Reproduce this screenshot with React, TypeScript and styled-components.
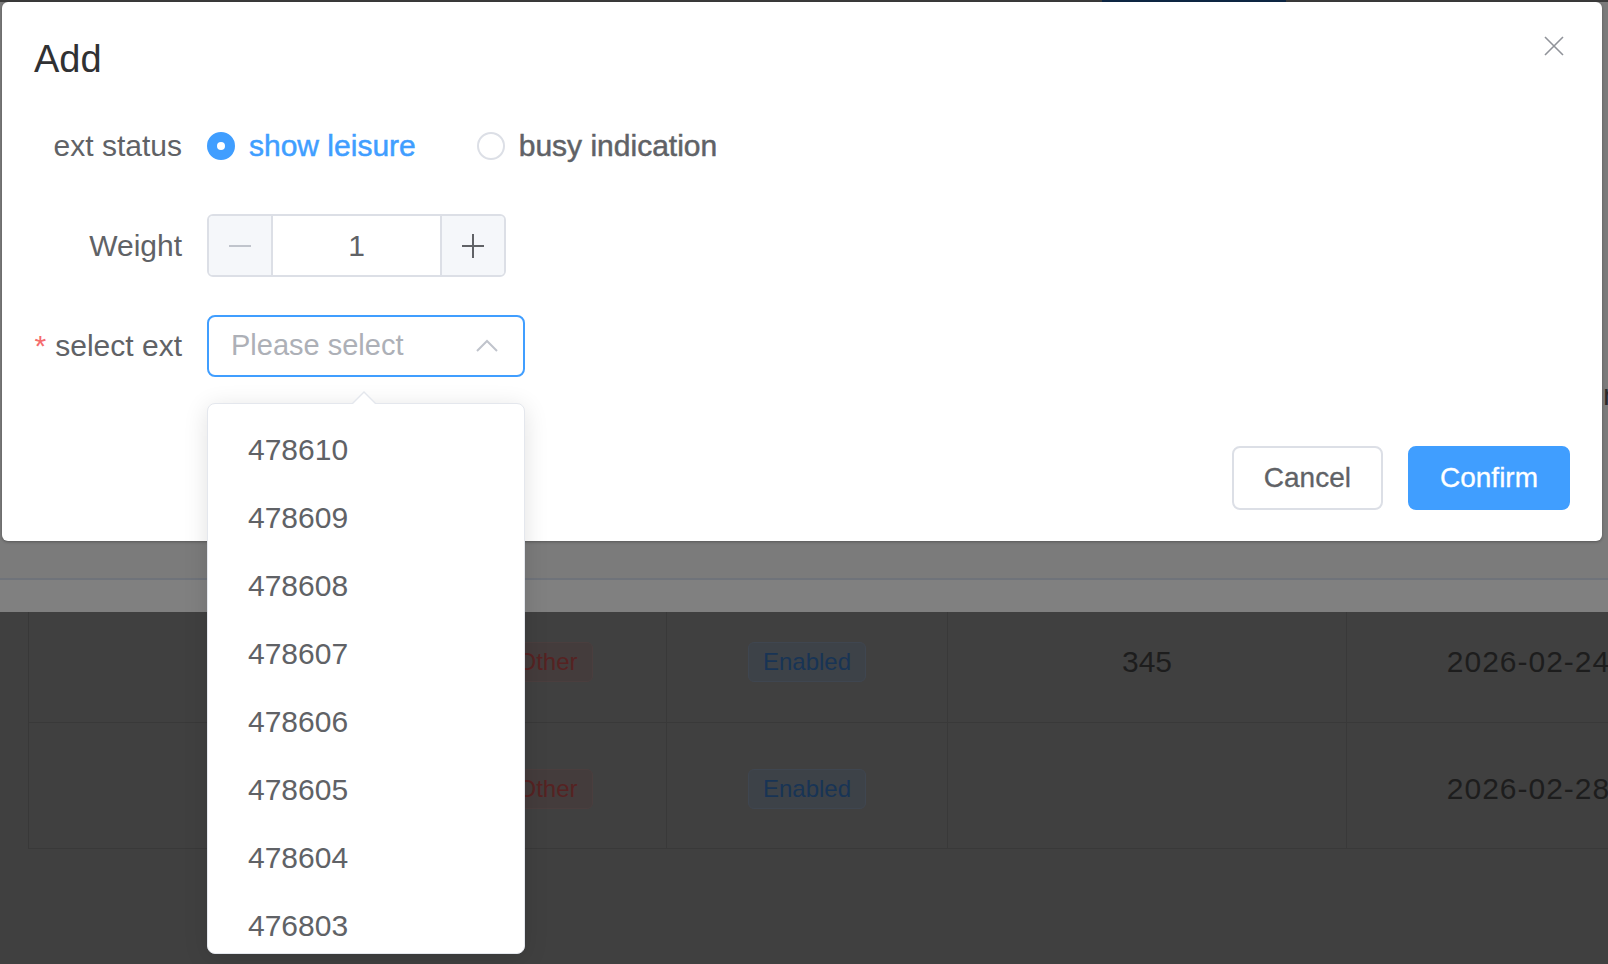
import React from "react";
import styled, { createGlobalStyle } from "styled-components";

const GlobalStyle = createGlobalStyle`
  html, body {
    margin: 0;
    padding: 0;
  }
  body {
    font-family: "Liberation Sans", Arial, Helvetica, sans-serif;
    background: #404040;
    overflow: hidden;
  }
  * {
    box-sizing: border-box;
  }
`;

const Page = styled.div`
  position: relative;
  width: 1608px;
  height: 964px;
  overflow: hidden;
  background: #404040;
`;

/* ---------- page behind the masks ---------- */

const TopStrip = styled.div`
  display: flex;
  height: 2px;
  background: #3b3b3b;
`;

const TopStripAccent = styled.div`
  margin-left: 1102px;
  width: 184px;
  background: #0e2744;
`;

const MaskedArea = styled.div`
  display: flex;
  justify-content: flex-end;
  align-items: flex-start;
  height: 576px;
  padding-top: 376px;
  background: #7b7b7b;
`;

const EdgeGlyph = styled.span`
  margin-right: -5px;
  font-size: 30px;
  line-height: 34px;
  color: #2a2a2a;
`;

const BandDivider = styled.div`
  height: 2px;
  background: #6f737a;
`;

const HeaderBand = styled.div`
  height: 32px;
  background: #808080;
`;

const TableArea = styled.div`
  padding-left: 28px;
`;

const Table = styled.div`
  display: grid;
  grid-template-columns: 400px 238px 281px 399px 364px;
  width: max-content;
  border-left: 1px solid #383838;
`;

const Cell = styled.div<{ $height: number; $offset: number }>`
  display: flex;
  align-items: center;
  justify-content: center;
  height: ${(p) => p.$height}px;
  padding-top: ${(p) => Math.max(p.$offset, 0)}px;
  padding-bottom: ${(p) => Math.max(-p.$offset, 0)}px;
  border-right: 1px solid #393939;
  border-bottom: 1px solid #393939;
  font-size: 30px;
  color: #1d1d1d;
  white-space: nowrap;
`;

const DateText = styled.span`
  letter-spacing: 1px;
`;

const Tag = styled.span<{ $tone: "danger" | "info" }>`
  display: inline-flex;
  align-items: center;
  height: 40px;
  padding: 0 14px;
  border-radius: 6px;
  font-size: 24px;
  border: 1px solid ${(p) => (p.$tone === "danger" ? "#4a3e3e" : "#3f4650")};
  background: ${(p) => (p.$tone === "danger" ? "#443c3c" : "#3d4248")};
  color: ${(p) => (p.$tone === "danger" ? "#562222" : "#183455")};
`;

/* ---------- dialog ---------- */

const Dialog = styled.div`
  position: absolute;
  top: 2px;
  left: 2px;
  width: 1600px;
  background: #fff;
  border-radius: 6px;
  box-shadow: 0 1px 3px rgba(0, 0, 0, 0.3);
`;

const DialogHeader = styled.div`
  padding: 33px 32px 0 32px;
`;

const DialogTitle = styled.span`
  display: block;
  font-size: 38px;
  line-height: 48px;
  color: #303133;
`;

const CloseButton = styled.button`
  position: absolute;
  top: 34px;
  right: 38px;
  display: flex;
  width: 20px;
  height: 20px;
  padding: 0;
  border: 0;
  background: none;
  cursor: pointer;
`;

const DialogBody = styled.div`
  display: flex;
  flex-direction: column;
  gap: 37px;
  padding: 31px 0 0 30px;
`;

const FormRow = styled.div`
  display: grid;
  grid-template-columns: 175px auto;
  align-items: center;
  height: 63px;
`;

const FormLabel = styled.label`
  padding-right: 25px;
  text-align: right;
  white-space: nowrap;
  font-size: 30px;
  color: #606266;
`;

const Required = styled.span`
  margin-right: 9px;
  color: #f56c6c;
`;

const RadioGroup = styled.div`
  display: flex;
  align-items: center;
`;

const Radio = styled.label`
  display: flex;
  align-items: center;
  margin-right: 61px;
  cursor: pointer;
`;

const RadioCircle = styled.span<{ $checked: boolean }>`
  display: flex;
  align-items: center;
  justify-content: center;
  width: 28px;
  height: 28px;
  border-radius: 50%;
  border: 2px solid ${(p) => (p.$checked ? "#409eff" : "#dcdfe6")};
  background: ${(p) => (p.$checked ? "#409eff" : "#fff")};
  &::after {
    content: "";
    width: 8px;
    height: 8px;
    border-radius: 50%;
    background: #fff;
    display: ${(p) => (p.$checked ? "block" : "none")};
  }
`;

const RadioText = styled.span<{ $checked: boolean }>`
  margin-left: 14px;
  font-size: 30px;
  color: ${(p) => (p.$checked ? "#409eff" : "#606266")};
  -webkit-text-stroke: 0.5px currentColor;
`;

const NumberInput = styled.div`
  display: grid;
  grid-template-columns: 64px 1fr 64px;
  width: 299px;
  height: 63px;
  border: 2px solid #dcdfe6;
  border-radius: 6px;
  overflow: hidden;
`;

const StepButton = styled.span<{ $side: "left" | "right" }>`
  display: flex;
  align-items: center;
  justify-content: center;
  background: #f5f7fa;
  border-${(p) => (p.$side === "left" ? "right" : "left")}: 2px solid #dcdfe6;
`;

const NumberValue = styled.span`
  display: flex;
  align-items: center;
  justify-content: center;
  font-size: 30px;
  color: #606266;
`;

const SelectBox = styled.div`
  position: relative;
  display: flex;
  align-items: center;
  justify-content: space-between;
  width: 318px;
  height: 62px;
  padding: 0 25px 0 22px;
  border: 2px solid #409eff;
  border-radius: 8px;
`;

const Placeholder = styled.span`
  font-size: 29px;
  color: #adb0b7;
`;

const Dropdown = styled.div`
  position: absolute;
  top: 86px;
  left: -2px;
  width: 318px;
  height: 551px;
  background: #fff;
  border: 1px solid #e4e7ed;
  border-radius: 8px;
  box-shadow: 0 4px 24px rgba(0, 0, 0, 0.12);
`;

const DropdownArrow = styled.span`
  position: absolute;
  top: -13px;
  left: 144px;
  width: 0;
  height: 0;
  border-left: 12px solid transparent;
  border-right: 12px solid transparent;
  border-bottom: 12px solid #e4e7ed;
  &::after {
    content: "";
    position: absolute;
    top: 2px;
    left: -11px;
    border-left: 11px solid transparent;
    border-right: 11px solid transparent;
    border-bottom: 11px solid #fff;
  }
`;

const OptionList = styled.ul`
  height: 100%;
  margin: 0;
  padding: 12px 0;
  list-style: none;
  overflow: hidden;
  border-radius: 8px;
`;

const Option = styled.li`
  height: 68px;
  padding: 0 40px;
  line-height: 68px;
  font-size: 30px;
  color: #606266;
`;

const DialogFooter = styled.div`
  display: flex;
  justify-content: flex-end;
  gap: 25px;
  padding: 69px 32px 31px;
`;

const Button = styled.button<{ $primary?: boolean }>`
  height: 64px;
  padding: 0 30px;
  border-radius: 8px;
  font-family: inherit;
  font-size: 28px;
  -webkit-text-stroke: 0.3px currentColor;
  cursor: pointer;
  border: 2px solid ${(p) => (p.$primary ? "#409eff" : "#dcdfe6")};
  background: ${(p) => (p.$primary ? "#409eff" : "#fff")};
  color: ${(p) => (p.$primary ? "#fff" : "#606266")};
`;

const extOptions = [
  "478610",
  "478609",
  "478608",
  "478607",
  "478606",
  "478605",
  "478604",
  "476803",
];

const tableRows = [
  { height: 111, offset: -10, count: "345", date: "2026-02-24" },
  { height: 126, offset: 6, count: "", date: "2026-02-28" },
];

const CloseIcon = () => (
  <svg width="20" height="20" viewBox="0 0 20 20">
    <path d="M1 1 L19 19 M19 1 L1 19" stroke="#909399" strokeWidth="1.6" fill="none" />
  </svg>
);

const MinusIcon = () => (
  <svg width="22" height="22" viewBox="0 0 22 22">
    <path d="M0 11 H22" stroke="#c0c4cc" strokeWidth="2" />
  </svg>
);

const PlusIcon = () => (
  <svg width="22" height="24" viewBox="0 0 22 24">
    <path d="M0 12 H22 M11 0 V24" stroke="#606266" strokeWidth="2" />
  </svg>
);

const ChevronUp = () => (
  <svg width="22" height="13" viewBox="0 0 22 13">
    <polyline points="1,12 11,2 21,12" stroke="#c0c4cc" strokeWidth="2" fill="none" />
  </svg>
);

export default function App() {
  return (
    <Page>
      <GlobalStyle />
      <TopStrip>
        <TopStripAccent />
      </TopStrip>
      <MaskedArea>
        <EdgeGlyph>r</EdgeGlyph>
      </MaskedArea>
      <BandDivider />
      <HeaderBand />
      <TableArea>
        <Table>
          {tableRows.map((row) => (
            <React.Fragment key={row.date}>
              <Cell $height={row.height} $offset={row.offset} />
              <Cell $height={row.height} $offset={row.offset}>
                <Tag $tone="danger">Other</Tag>
              </Cell>
              <Cell $height={row.height} $offset={row.offset}>
                <Tag $tone="info">Enabled</Tag>
              </Cell>
              <Cell $height={row.height} $offset={row.offset}>
                {row.count}
              </Cell>
              <Cell $height={row.height} $offset={row.offset}>
                <DateText>{row.date}</DateText>
              </Cell>
            </React.Fragment>
          ))}
        </Table>
      </TableArea>

      <Dialog>
        <DialogHeader>
          <DialogTitle>Add</DialogTitle>
        </DialogHeader>
        <CloseButton aria-label="Close">
          <CloseIcon />
        </CloseButton>

        <DialogBody>
          <FormRow>
            <FormLabel>ext status</FormLabel>
            <RadioGroup>
              <Radio>
                <RadioCircle $checked />
                <RadioText $checked>show leisure</RadioText>
              </Radio>
              <Radio>
                <RadioCircle $checked={false} />
                <RadioText $checked={false}>busy indication</RadioText>
              </Radio>
            </RadioGroup>
          </FormRow>

          <FormRow>
            <FormLabel>Weight</FormLabel>
            <NumberInput>
              <StepButton $side="left">
                <MinusIcon />
              </StepButton>
              <NumberValue>1</NumberValue>
              <StepButton $side="right">
                <PlusIcon />
              </StepButton>
            </NumberInput>
          </FormRow>

          <FormRow>
            <FormLabel>
              <Required>*</Required>select ext
            </FormLabel>
            <SelectBox>
              <Placeholder>Please select</Placeholder>
              <ChevronUp />
              <Dropdown>
                <DropdownArrow />
                <OptionList>
                  {extOptions.map((ext) => (
                    <Option key={ext}>{ext}</Option>
                  ))}
                </OptionList>
              </Dropdown>
            </SelectBox>
          </FormRow>
        </DialogBody>

        <DialogFooter>
          <Button>Cancel</Button>
          <Button $primary>Confirm</Button>
        </DialogFooter>
      </Dialog>
    </Page>
  );
}
